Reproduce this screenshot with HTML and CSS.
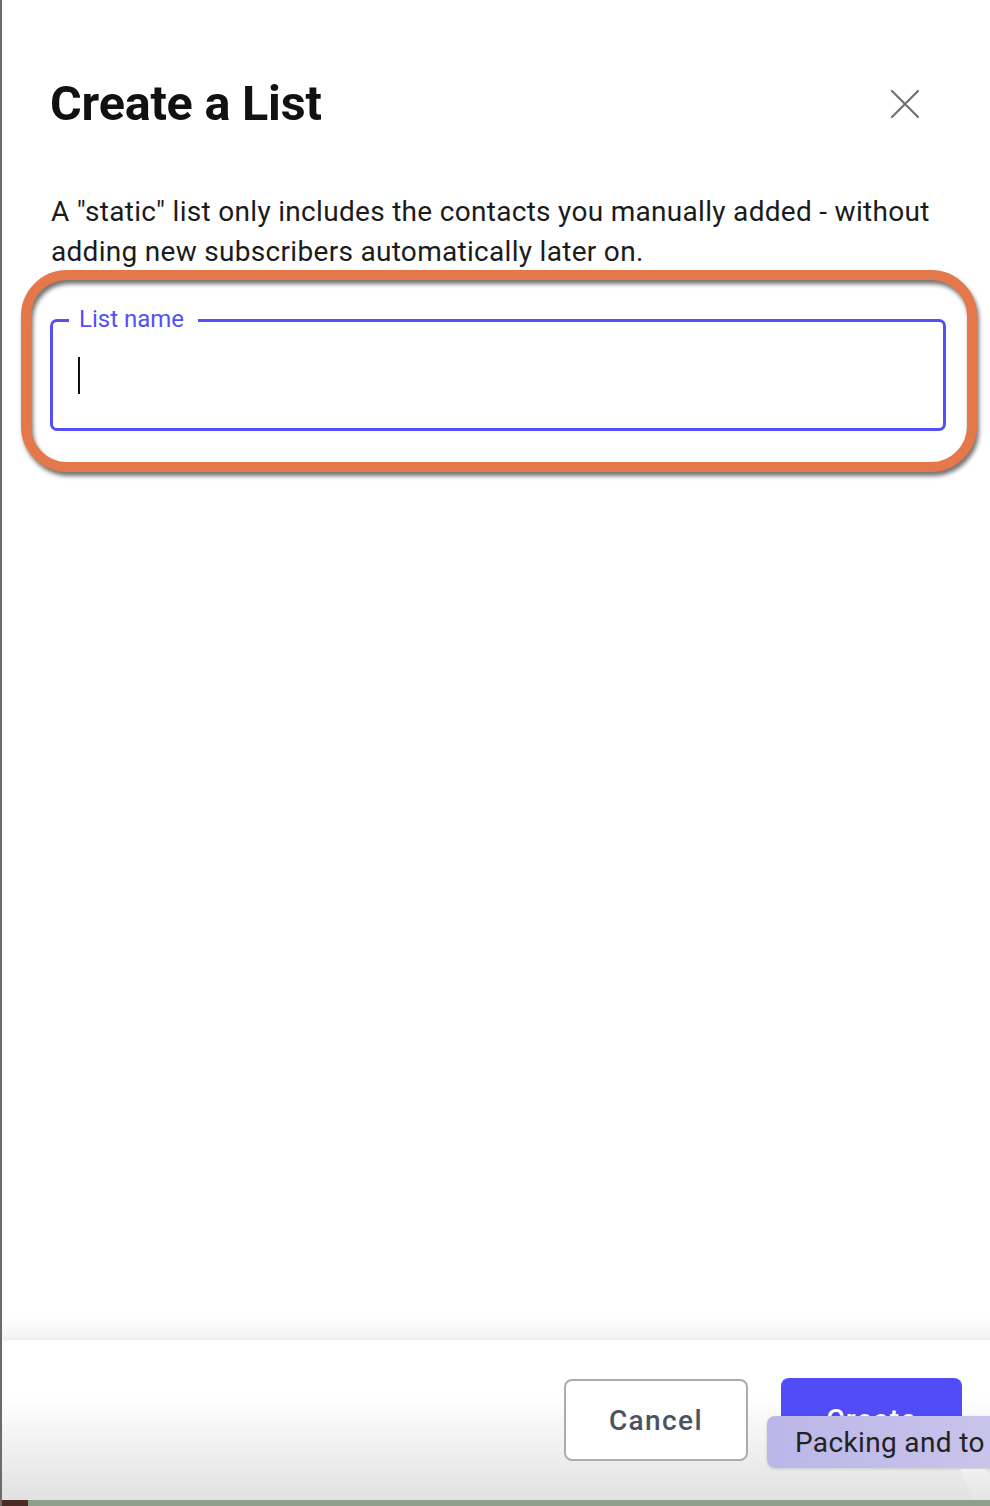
FILE: index.html
```html
<!DOCTYPE html>
<html lang="en">
<head>
<meta charset="utf-8">
<title>Create a List</title>
<link rel="stylesheet" href="styles.css">
</head>
<body>
<div class="window">
  <main class="modal-body">
    <header class="modal-header">
      <h1 class="modal-title">Create a List</h1>
      <button class="close-btn" aria-label="Close">
        <svg width="30" height="30" viewBox="0 0 30 30" aria-hidden="true">
          <path d="M2 2 L28 28 M28 2 L2 28" stroke="#707070" stroke-width="2.2" stroke-linecap="round" fill="none"/>
        </svg>
      </button>
    </header>
    <p class="description">A "static" list only includes the contacts you manually added - without adding new subscribers automatically later on.</p>
    <div class="highlight">
      <div class="field">
        <span class="field-label">List name</span>
        <span class="caret"></span>
      </div>
    </div>
  </main>
  <footer class="modal-footer">
    <button class="btn btn-cancel">Cancel</button>
    <button class="btn btn-create">Create</button>
    <div class="tooltip">Packing and to</div>
    <div class="tooltip-tail"></div>
  </footer>
  <div class="desktop-strip"><span class="strip-dark"></span></div>
</div>
</body>
</html>
```

FILE: styles.css
```css
* { box-sizing: border-box; }

html, body {
  margin: 0;
  padding: 0;
  width: 990px;
  height: 1506px;
  overflow: hidden;
  background: #ffffff;
  font-family: Roboto, "Liberation Sans", Arial, sans-serif;
}

.window {
  display: flex;
  flex-direction: column;
  height: 1506px;
  border-left: 2px solid #6b6b6b;
  background: #ffffff;
}

.modal-body {
  flex: 1;
  padding: 76px 44px 0 48px;
  background: linear-gradient(to bottom, #ffffff 0, #ffffff calc(100% - 22px), #f1f1f1 100%);
}

.modal-header {
  display: flex;
  align-items: center;
  justify-content: space-between;
  height: 56px;
}

.modal-title {
  margin: 0;
  font-size: 48.5px;
  line-height: 56px;
  font-weight: 700;
  color: #111111;
  letter-spacing: -0.2px;
}

.close-btn {
  border: 0;
  background: none;
  padding: 0;
  width: 30px;
  height: 30px;
  margin-right: 26px;
  display: flex;
  align-items: center;
  justify-content: center;
}

.description {
  margin: 60px 0 0 1px;
  font-size: 28px;
  line-height: 40px;
  color: #1b1b1b;
  letter-spacing: 0.3px;
}

.highlight {
  position: relative;
  margin: -2px -31px 0 -29px;
  padding: 49px 31px 41px 29px;
}

.highlight::before {
  content: "";
  position: absolute;
  inset: 0;
  border: 10px solid #e4784a;
  border-radius: 46px;
  filter: drop-shadow(2px 4px 2px rgba(0, 0, 0, 0.55));
  pointer-events: none;
}

.field {
  position: relative;
  height: 112px;
  border: 3px solid #5450f5;
  border-radius: 7px;
  display: flex;
  align-items: center;
  padding-left: 25px;
}

.field-label {
  position: absolute;
  top: -17px;
  left: 16px;
  padding: 0 14px 0 10px;
  background: #ffffff;
  color: #5450f5;
  font-size: 24px;
  line-height: 28px;
}

.caret {
  display: block;
  width: 2px;
  height: 37px;
  background: #111111;
}

.modal-footer {
  position: relative;
  height: 160px;
  display: flex;
  justify-content: flex-end;
  align-items: flex-start;
  gap: 33px;
  padding: 39px 28px 0 0;
  border-top-left-radius: 6px;
  background: linear-gradient(to bottom, #ffffff 0, #ffffff 35%, #e1e1e1 100%);
  box-shadow: 0 -1px 0 #ececec;
}

.btn {
  font-family: Roboto, "Liberation Sans", Arial, sans-serif;
  font-size: 28px;
  font-weight: 500;
  letter-spacing: 1.4px;
  border-radius: 8px;
  cursor: pointer;
}

.btn-cancel {
  width: 184px;
  height: 82px;
  background: #ffffff;
  border: 2px solid #a9acb1;
  color: #4b5361;
}

.btn-create {
  width: 181px;
  height: 82px;
  margin-top: -1px;
  background: #514cf5;
  border: 0;
  color: #ffffff;
}

.tooltip {
  position: absolute;
  left: 765px;
  top: 76px;
  width: 240px;
  height: 52px;
  padding-left: 28px;
  border-radius: 8px;
  background: linear-gradient(to right, #bbb6e8, #c9c5ea);
  box-shadow: 0 1px 3px rgba(0, 0, 0, 0.15);
  color: #222222;
  font-size: 28px;
  letter-spacing: 0.35px;
  line-height: 54px;
  white-space: nowrap;
  overflow: hidden;
}

.tooltip-tail {
  position: absolute;
  left: 958px;
  top: 128px;
  width: 40px;
  height: 32px;
  border-top: 1px solid #d0d0d0;
  border-bottom-right-radius: 14px;
  background: linear-gradient(to bottom, #f1f1f1, #e4e4e4);
  clip-path: polygon(0 0, 60% 0, 100% 60%, 100% 100%, 30% 100%);
}

.desktop-strip {
  height: 6px;
  background: #8fa08a;
  display: flex;
}

.strip-dark {
  width: 26px;
  height: 6px;
  background: #4a2a22;
}
```
